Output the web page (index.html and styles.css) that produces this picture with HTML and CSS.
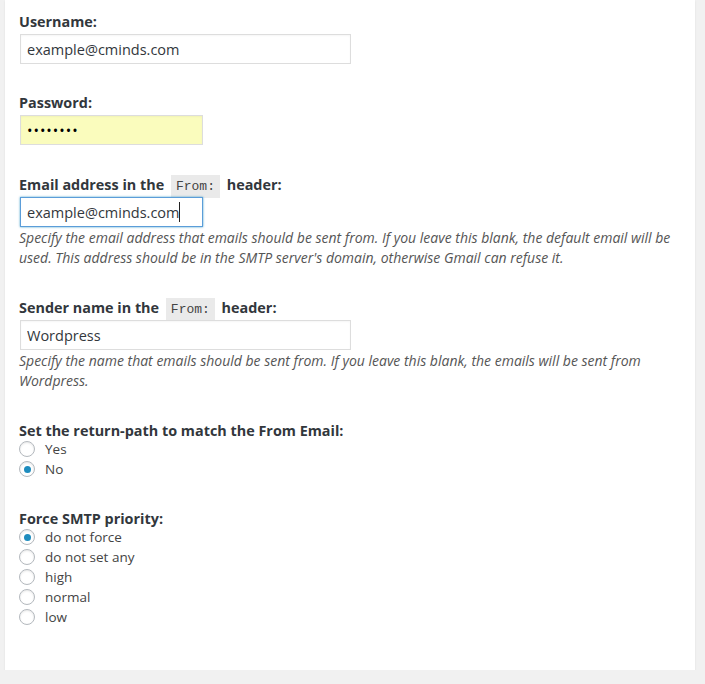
FILE: index.html
```html
<!DOCTYPE html>
<html>
	<head>
		<meta charset="UTF-8">
		<title>SMTP settings</title>
		<link rel="stylesheet" href="styles.css">
	</head>
	<body>
		<div class="panel">
			<div class="field">
				<label class="label" for="username">Username:</label>
				<input id="username" class="text wide" type="text" value="example@cminds.com">
			</div>
			<div class="field">
				<label class="label" for="password">Password:</label>
				<input id="password" class="text short autofill" type="password" value="12345678">
			</div>
			<div class="field">
				<label class="label has-code" for="from_email">Email address in the <code>From:</code> header:</label>
				<input id="from_email" class="text short focus" type="text" value="example@cminds.com"><span class="caret"></span>
				<p class="description">Specify the email address that emails should be sent from. If you leave this blank, the default email will be used. This address should be in the SMTP server's domain, otherwise Gmail can refuse it.</p>
			</div>
			<div class="field">
				<label class="label has-code" for="from_name">Sender name in the <code>From:</code> header:</label>
				<input id="from_name" class="text wide" type="text" value="Wordpress">
				<p class="description">Specify the name that emails should be sent from. If you leave this blank, the emails will be sent from Wordpress.</p>
			</div>
			<div class="field">
				<span class="label group">Set the return-path to match the From Email:</span>
				<label class="radio"><span class="dot"></span>Yes</label>
				<label class="radio"><span class="dot checked"></span>No</label>
			</div>
			<div class="field last">
				<span class="label group">Force SMTP priority:</span>
				<label class="radio"><span class="dot checked"></span>do not force</label>
				<label class="radio"><span class="dot"></span>do not set any</label>
				<label class="radio"><span class="dot"></span>high</label>
				<label class="radio"><span class="dot"></span>normal</label>
				<label class="radio"><span class="dot"></span>low</label>
			</div>
		</div>
	</body>
</html>
```

FILE: styles.css
```css
body, html { margin: 0; padding: 0; background: #f1f1f1; }
body { font-family: "Open Sans", "Noto Sans", sans-serif; font-size: 13px; color: #444; }
.panel { margin: 0 10px 0 5px; padding: 12px 14px 43px; background: #fff; box-shadow: 0 1px 2px rgba(0,0,0,.08); }
.field { margin-bottom: 29px; }
.field.last { margin-bottom: 0; }
.label { display: block; font-size: 14.4px; font-weight: 700; line-height: 20px; margin-bottom: 2px; color: #32373c; }
.label.has-code { padding-top: 1px; }
.label.group { padding-top: 1px; margin-bottom: -2px; }
code { font-family: "Liberation Mono", monospace; font-size: 13px; line-height: 1; font-weight: 400; background: #eaeaea; padding: 4px 5px; margin: 0 3px; color: #444; }
.text { box-sizing: border-box; height: 30px; margin: 0 0 0 1px; padding: 0 6px; border: 1px solid #ddd; font-family: inherit; font-size: 14.5px; color: #32373c; background: #fff; box-shadow: inset 0 1px 2px rgba(0,0,0,.04); outline: none; vertical-align: top; }
.wide { width: 331px; }
.short { width: 183px; }
.autofill { background: #fafcbd; letter-spacing: 1px; color: #000; }
.focus { border-color: #5b9dd9; box-shadow: 0 0 2px rgba(30,140,190,.8); }
.caret { display: inline-block; width: 1px; height: 20px; background: #222; margin: 5px 0 0 -24px; vertical-align: top; }
.description { margin: 1px 0 0; font-style: italic; font-size: 14px; line-height: 20px; color: #555; }
.radio { display: flex; align-items: center; height: 20px; font-size: 13.5px; color: #444; }
.dot { box-sizing: border-box; width: 16px; height: 16px; margin: 0 10px 0 0; border: 1px solid #b4b9be; border-radius: 50%; background: #fff; box-shadow: inset 0 1px 2px rgba(0,0,0,.1); display: flex; align-items: center; justify-content: center; }
.dot.checked:before { content: ""; width: 7px; height: 7px; border-radius: 50%; background: #1e8cbe; }
```
